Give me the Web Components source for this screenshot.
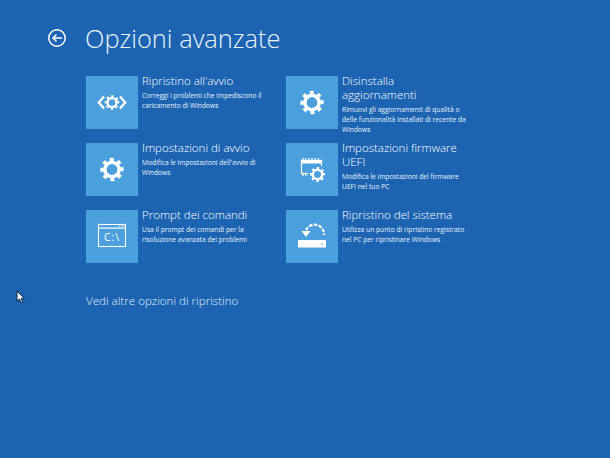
<!DOCTYPE html>
<html lang="it">
<head>
<meta charset="utf-8">
<title>Opzioni avanzate</title>
<style>
  html, body { margin: 0; height: 100%; }
  body { background: #1c63b1; overflow: hidden; }
</style>
</head>
<body>
<recovery-screen>
  <recovery-tile slot="tile" heading="Ripristino all'avvio" icon="startup">Correggi i problemi che impediscono il<br>caricamento di Windows</recovery-tile>
  <recovery-tile slot="tile" heading="Disinstalla aggiornamenti" icon="gear">Rimuovi gli aggiornamenti di qualità o<br>delle funzionalità installati di recente da<br>Windows</recovery-tile>
  <recovery-tile slot="tile" heading="Impostazioni di avvio" icon="gear">Modifica le impostazioni dell'avvio di<br>Windows</recovery-tile>
  <recovery-tile slot="tile" heading="Impostazioni firmware UEFI" icon="uefi">Modifica le impostazioni del firmware<br>UEFI nel tuo PC</recovery-tile>
  <recovery-tile slot="tile" heading="Prompt dei comandi" icon="cmd">Usa il prompt dei comandi per la<br>risoluzione avanzata dei problemi</recovery-tile>
  <recovery-tile slot="tile" heading="Ripristino del sistema" icon="restore">Utilizza un punto di ripristino registrato<br>nel PC per ripristinare Windows</recovery-tile>
</recovery-screen>

<script>
const TILE = "#4b9fdc";

// ingranaggio: anello + denti fatti con un tratto tratteggiato
const gear = (cx, cy, s) => `
  <circle cx="${cx}" cy="${cy}" r="${7.2 * s}" fill="none" stroke="#fff" stroke-width="${3.6 * s}"/>
  <circle cx="${cx}" cy="${cy}" r="${10 * s}" fill="none" stroke="#fff" stroke-width="${3.4 * s}"
    stroke-dasharray="${3.9 * s} ${3.95 * s}" transform="rotate(-14 ${cx} ${cy})"/>`;

const icons = {
  gear: gear(26, 26.5, 1),
  startup: `
    ${gear(26, 26.5, 0.62)}
    <path d="M18 20.5 L12.8 26.5 L18 32.5 M34 20.5 L39.2 26.5 L34 32.5" fill="none" stroke="#fff" stroke-width="2.3"/>`,
  uefi: `
    <rect x="15.5" y="17.5" width="20" height="13" fill="none" stroke="#fff" stroke-width="1.2"/>
    <rect x="15" y="17" width="21" height="3.5" fill="#fff"/>
    <path d="M17 15 V17 M20 15 V17 M23 15 V17 M26 15 V17 M29 15 V17 M32 15 V17 M17 31 V33 M20 31 V33 M23 31 V33" stroke="#fff" stroke-width="1.2"/>
    <circle cx="31.5" cy="31.5" r="9.5" fill="${TILE}"/>
    ${gear(31.5, 31.5, 0.64)}`,
  cmd: `
    <rect x="12.5" y="14.5" width="27" height="22" fill="none" stroke="#fff" stroke-width="1.1"/>
    <rect x="12" y="17.5" width="28" height="1.2" fill="#fff"/>
    <path d="M33 16 H34.5 M35.6 16 H37 M38 16 H39" stroke="#fff" stroke-width="1.2"/>
    <text x="26" y="31" text-anchor="middle" font-family="'Open Sans', sans-serif" font-size="10.5" letter-spacing="1" fill="#fff">C:\\</text>`,
  restore: `
    <path d="M13 30 H39 Q40 30 40 31 V37.5 H12 V31 Q12 30 13 30 Z" fill="#fff"/>
    <circle cx="36" cy="34" r="0.8" fill="${TILE}"/>
    <path d="M20 20 A9.5 9.5 0 0 1 38 25" fill="none" stroke="#fff" stroke-width="2.2" stroke-dasharray="3.5 1.4"/>
    <path d="M15.5 21 H24.5 L20 27 Z" fill="#fff"/>`
};

const tileTemplate = document.createElement("template");
tileTemplate.innerHTML = `
  <style>
    :host { display: grid; grid-template-columns: 52px 1fr; column-gap: 4px; height: 53px; color: #fff; }
    .icon { width: 52px; height: 53px; background: ${TILE}; }
    svg { display: block; }
    h2 { margin: -2px 0 0; font: 300 11.5px/14px "Open Sans", sans-serif; color: #fff; }
    p { margin: 3px 0 0; font: 400 6.7px/10px "Open Sans", sans-serif; white-space: nowrap; color: #e8f2fb; }
  </style>
  <div class="icon"><svg width="52" height="53" viewBox="0 0 52 53"></svg></div>
  <div>
    <h2></h2>
    <p><slot></slot></p>
  </div>`;

class RecoveryTile extends HTMLElement {
  constructor() {
    super();
    this.attachShadow({ mode: "open" });
  }
  connectedCallback() {
    const copy = tileTemplate.content.cloneNode(true);
    copy.querySelector("h2").textContent = this.getAttribute("heading") ?? "";
    copy.querySelector("svg").innerHTML = icons[this.getAttribute("icon")] ?? "";
    this.shadowRoot.appendChild(copy);
  }
}
customElements.define("recovery-tile", RecoveryTile);

const screenTemplate = document.createElement("template");
screenTemplate.innerHTML = `
  <style>
    :host { display: block; position: relative; height: 458px; padding: 22px 0 0 47px; box-sizing: border-box; color: #fff; }
    header { display: flex; align-items: center; gap: 18px; height: 32px; }
    h1 { margin: 0; font: 300 25.4px/32px "Open Sans", sans-serif; color: #eaf4fc; }
    .tiles { display: grid; grid-template-columns: 180px 180px; column-gap: 20px; row-gap: 14px; margin: 22px 0 0 39px; }
    .more { margin: 30px 0 0 39px; font: 300 11.6px/16px "Open Sans", sans-serif; color: #e3effa; }
    .cursor { position: absolute; left: 16px; top: 290px; }
  </style>
  <header>
    <svg width="20" height="20" viewBox="0 0 20 20">
      <circle cx="10" cy="10" r="8.2" fill="none" stroke="#fff" stroke-width="1.5"/>
      <path d="M15 10 H6 M9.5 6.5 L6 10 L9.5 13.5" fill="none" stroke="#fff" stroke-width="1.5"/>
    </svg>
    <h1>Opzioni avanzate</h1>
  </header>
  <div class="tiles"><slot name="tile"></slot></div>
  <div class="more">Vedi altre opzioni di ripristino</div>
  <svg class="cursor" width="10" height="14" viewBox="0 0 10 14">
    <path d="M1 1 V11 L3.4 9 L5 12.6 L6.6 12 L5.2 8.4 L8 8.2 Z" fill="#fff" stroke="#10233f" stroke-width="1"/>
  </svg>`;

class RecoveryScreen extends HTMLElement {
  constructor() {
    super();
    this.attachShadow({ mode: "open" }).appendChild(screenTemplate.content.cloneNode(true));
  }
}
customElements.define("recovery-screen", RecoveryScreen);
</script>
</body>
</html>
